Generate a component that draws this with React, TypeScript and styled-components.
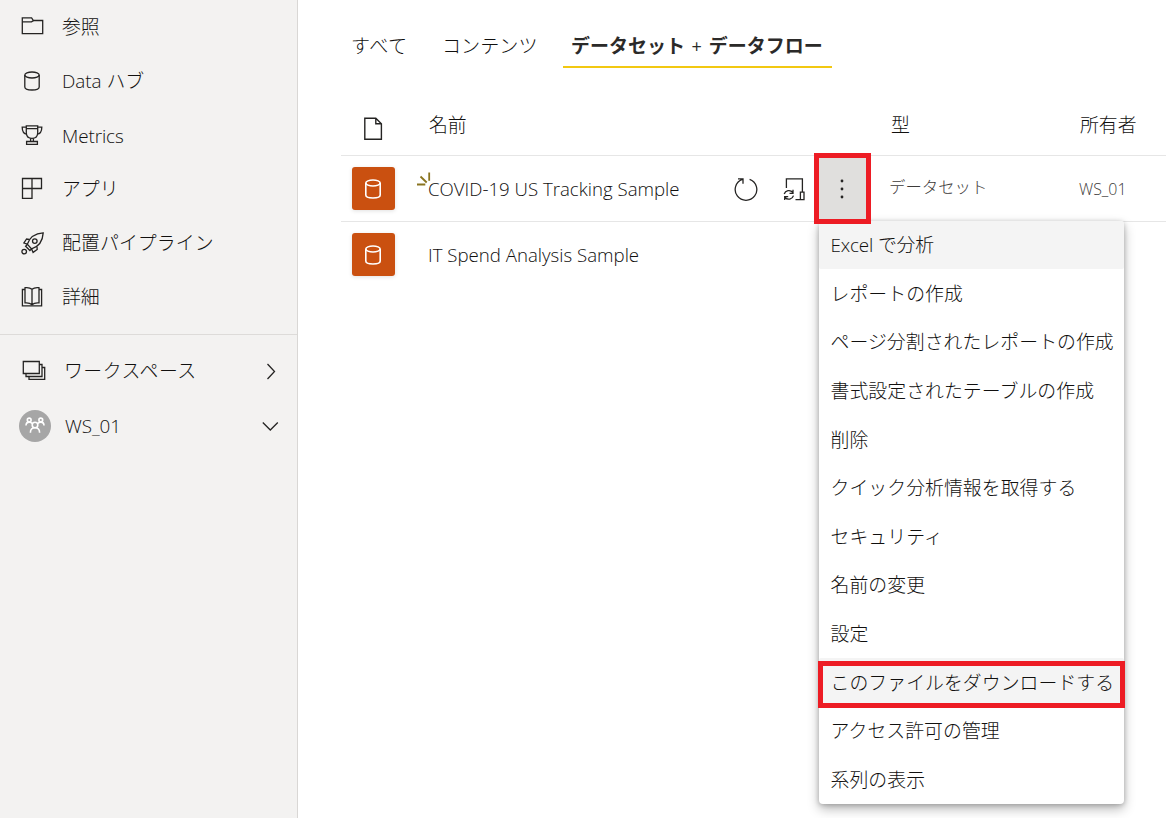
import React from "react";
import styled, { createGlobalStyle } from "styled-components";

const GlobalStyle = createGlobalStyle`
  * { box-sizing: border-box; }
  body {
    margin: 0;
    background: #fff;
    overflow: hidden;
    font-family: "Open Sans", "Noto Sans CJK JP", sans-serif;
    font-size: 18.88px;
    font-weight: 300;
    color: #11100f;
  }
`;

const Page = styled.div`
  display: flex;
  width: 1166px;
  height: 818px;
  overflow: hidden;
`;

const Sidebar = styled.nav`
  flex: 0 0 298px;
  background: #f3f2f1;
  border-right: 1px solid #d9d7d5;
`;

const NavGroup = styled.div<{ $top?: number }>`
  display: flex;
  flex-direction: column;
  padding-top: ${(p) => p.$top ?? 0}px;
`;

const NavItem = styled.a<{ $height?: number }>`
  display: flex;
  align-items: center;
  height: ${(p) => p.$height ?? 54}px;
  padding-right: 17px;
  svg { flex: none; }
`;

const NavIcon = styled.span<{ $width?: number }>`
  display: flex;
  align-items: center;
  width: ${(p) => p.$width ?? 62}px;
  padding-left: 20px;
`;

const Label = styled.span<{ $tracking?: number; $top?: number }>`
  flex: 1;
  padding-top: ${(p) => p.$top ?? 0}px;
  line-height: 26px;
  white-space: nowrap;
  letter-spacing: ${(p) => p.$tracking ?? 0}px;
`;

const Divider = styled.hr`
  height: 1px;
  margin: 10px 0 0;
  border: 0;
  background: #dddbd9;
`;

const Avatar = styled.span`
  display: flex;
  align-items: center;
  justify-content: center;
  width: 32px;
  height: 32px;
  margin-left: -1px;
  border-radius: 50%;
  background: #a6a6a6;
`;

const Main = styled.main`
  flex: 1;
  min-width: 0;
  padding-left: 43px;
`;

const Tabs = styled.div`
  display: flex;
  height: 68px;
  padding: 24px 0 0 10px;
`;

const Tab = styled.button<{ $active?: boolean; $width: number; $tracking?: number }>`
  width: ${(p) => p.$width}px;
  height: 44px;
  margin: 0;
  padding: 0 ${(p) => (p.$active ? 8 : 0)}px;
  border: 0;
  border-bottom: 2px solid ${(p) => (p.$active ? "#f2c811" : "transparent")};
  background: none;
  color: ${(p) => (p.$active ? "#2b2a29" : "inherit")};
  font: inherit;
  font-size: ${(p) => (p.$active ? 19 : 19.1)}px;
  font-weight: ${(p) => (p.$active ? 700 : 300)};
  letter-spacing: ${(p) => p.$tracking ?? 0}px;
  white-space: nowrap;
  text-align: left;
`;

const Plus = styled.span`
  margin: 0 2px 0 1.5px;
  font-size: 18px;
  font-weight: 400;
`;

const Table = styled.div`
  display: flex;
  flex-direction: column;
  padding-top: 27px;
`;

const Row = styled.div<{ $height: number; $last?: boolean }>`
  display: grid;
  grid-template-columns: 87px 306px 48px 32px 57px 18px 190px 1fr;
  align-items: center;
  height: ${(p) => p.$height}px;
  border-bottom: 1px solid ${(p) => (p.$last ? "transparent" : "#e6e6e6")};
`;

const TypeIcon = styled.div`
  display: flex;
  padding-left: 22px;
  padding-top: 8px;
`;

const HeaderCell = styled.div<{ $column?: number; $indent?: number }>`
  grid-column: ${(p) => p.$column ?? "auto"};
  padding-left: ${(p) => p.$indent ?? 1}px;
  line-height: 26px;
`;

const Tile = styled.div`
  display: flex;
  align-items: center;
  justify-content: center;
  width: 43px;
  height: 43px;
  margin-left: 11px;
  padding-right: 1px;
  border-radius: 3px;
  background: #ca5010;
  box-shadow: 0 1px 4px rgba(0, 0, 0, 0.12);
`;

const Name = styled.div`
  position: relative;
  padding-bottom: 1px;
  font-size: 18.65px;
  white-space: nowrap;
`;

const Sparkle = styled.svg`
  position: absolute;
  left: -12px;
  top: -4px;
`;

const Muted = styled.div<{ $size: number; $lift?: number; $drop?: number }>`
  padding-top: ${(p) => p.$drop ?? 0}px;
  padding-bottom: ${(p) => p.$lift ?? 0}px;
  color: #3d3b3a;
  font-size: ${(p) => p.$size}px;
  white-space: nowrap;
`;

const MoreButton = styled.button`
  position: relative;
  z-index: 3;
  display: flex;
  align-items: center;
  justify-content: center;
  width: 57px;
  height: 71px;
  margin: -3px 0;
  padding: 0 1px 0 0;
  border: 5px solid #ed1c24;
  background: #e0dfdd;
`;

const Menu = styled.ul`
  position: absolute;
  z-index: 2;
  left: 819px;
  top: 221px;
  width: 305px;
  height: 583px;
  display: flex;
  flex-direction: column;
  margin: 0;
  padding: 0;
  list-style: none;
  border-radius: 4px;
  background: #fff;
  box-shadow: 0 5px 12px rgba(0, 0, 0, 0.28), 0 1px 5px rgba(0, 0, 0, 0.22);
`;

const MenuItem = styled.li<{ $shaded?: boolean; $tracking?: number }>`
  position: relative;
  display: flex;
  flex: 1;
  align-items: center;
  padding: 0 0 1.4px 11.5px;
  background: ${(p) => (p.$shaded ? "#f4f4f4" : "transparent")};
  border-radius: ${(p) => (p.$shaded ? "2px" : "0")};
  white-space: nowrap;
  letter-spacing: ${(p) => p.$tracking ?? 0.05}px;

  &:first-child {
    flex: 0 0 48px;
    padding-bottom: 2px;
  }
`;

const Highlight = styled.span`
  position: absolute;
  left: -1px;
  right: -1px;
  top: 2.6px;
  height: 47px;
  border: 5px solid #ed1c24;
`;

type IconProps = { size?: number; children: React.ReactNode; color?: string; width?: number };

const Icon = ({ size = 24, children, color = "#252423", width = 1.3 }: IconProps) => (
  <svg width={size} height={size} viewBox={`0 0 ${size} ${size}`} fill="none" stroke={color} strokeWidth={width}>
    {children}
  </svg>
);

const Cylinder = () => (
  <>
    <ellipse cx="12" cy="6" rx="7.2" ry="3" />
    <path d="M4.8 6v12c0 1.7 3.2 3 7.2 3s7.2-1.3 7.2-3V6" />
  </>
);

const FolderIcon = () => (
  <Icon>
    <path d="M2.3 18.6V2.9h9.3l1.8 2.6h9.3v13.1H2.3z" />
    <path d="M2.3 6.9h9.2l2.1-1.4" />
  </Icon>
);

const TrophyIcon = () => (
  <Icon>
    <path d="M6.3 2.9h11.4v6.8c0 3.6-2.4 5.6-5.7 5.6s-5.7-2-5.7-5.6V2.9zM6.3 5.6h11.4" />
    <path d="M6.3 4.2H2.2c0 4 1.5 6.6 4.7 6.9M17.7 4.2h4.1c0 4-1.5 6.6-4.7 6.9M10.6 15.3v2.9M13.4 15.3v2.9M6.6 21.3v-2.8h10.8v2.8z" />
  </Icon>
);

const AppsIcon = () => (
  <Icon>
    <path d="M2.5 1.5h19v10h-19zM12 1.5v19.9H2.5V11.5" />
  </Icon>
);

const RocketIcon = () => (
  <Icon>
    <path d="M7.3 13.2C9.5 6.8 14.4 2.5 23.2 1.9c-.5 8.6-5 13.9-11.6 16z" />
    <path d="M9.2 8.3 6.6 8 3.9 12l3.4 1.2M17 15.8l.2 2.7-4.1 2.9-1.5-3.5M7.6 13.3l-2 1.9 4.3 4.3 1.9-1.9" />
    <circle cx="14.8" cy="10.1" r="2.3" />
    <circle cx="4.2" cy="20.6" r="2.3" />
  </Icon>
);

const BookIcon = () => (
  <Icon>
    <path d="M12 19.8V4.3C10.5 3 8 2.3 5 2.7v15.2c3-.3 5.5.4 7 1.9 1.5-1.5 4-2.2 7-1.9V2.7c-3-.4-5.5.3-7 1.6" />
    <path d="M5 4.5H2.4v16.3h19.2V4.5H19" />
  </Icon>
);

const StackIcon = () => (
  <Icon size={26}>
    <path d="M3.3 3.5h16v12h-16zM6 15.5v3h16v-12h-2.7M9 18.5v2.8h15.7V9.5H22" />
  </Icon>
);

const PeopleIcon = () => (
  <Icon size={22} color="#fff" width={1.6}>
    <circle cx="5.2" cy="5" r="1.9" />
    <circle cx="16.8" cy="5" r="1.9" />
    <circle cx="11" cy="10" r="2.8" />
    <path d="M2 10.6c0-2.1 1.3-3.5 3.2-3.5 1.3 0 2.2.6 3.4 1.6M20 10.6c0-2.1-1.3-3.5-3.2-3.5-1.3 0-2.2.6-3.4 1.6M6.4 17.8c0-3 1.8-5 4.6-5s4.6 2 4.6 5" />
  </Icon>
);

const DatasetTile = () => (
  <Tile>
    <Icon color="#fff" width={1.6}>
      <Cylinder />
    </Icon>
  </Tile>
);

const menuItems = [
  "Excel で分析",
  "レポートの作成",
  "ページ分割されたレポートの作成",
  "書式設定されたテーブルの作成",
  "削除",
  "クイック分析情報を取得する",
  "セキュリティ",
  "名前の変更",
  "設定",
  "このファイルをダウンロードする",
  "アクセス許可の管理",
  "系列の表示",
];

export default function App() {
  return (
    <>
      <GlobalStyle />
      <Page lang="ja">
        <Sidebar>
          <NavGroup>
            <NavItem><NavIcon><FolderIcon /></NavIcon><Label>参照</Label></NavItem>
            <NavItem><NavIcon><Icon><Cylinder /></Icon></NavIcon><Label>Data ハブ</Label></NavItem>
            <NavItem><NavIcon><TrophyIcon /></NavIcon><Label $top={2} $tracking={-0.1}>Metrics</Label></NavItem>
            <NavItem><NavIcon><AppsIcon /></NavIcon><Label>アプリ</Label></NavItem>
            <NavItem><NavIcon><RocketIcon /></NavIcon><Label $tracking={0.1}>配置パイプライン</Label></NavItem>
            <NavItem><NavIcon><BookIcon /></NavIcon><Label>詳細</Label></NavItem>
          </NavGroup>
          <Divider />
          <NavGroup $top={8}>
            <NavItem $height={55}>
              <NavIcon $width={64}><StackIcon /></NavIcon>
              <Label $tracking={0.5} $top={1}>ワークスペース</Label>
              <Icon size={18}><path d="M5.5 2l7 7.5-7 7.5" /></Icon>
            </NavItem>
            <NavItem $height={55}>
              <NavIcon $width={65}><Avatar><PeopleIcon /></Avatar></NavIcon>
              <Label $tracking={-0.1}>WS_01</Label>
              <Icon size={18}><path d="M.8 5.5l7.5 7.5 7.5-7.5" /></Icon>
            </NavItem>
          </NavGroup>
        </Sidebar>
        <Main>
          <Tabs>
            <Tab $width={91} $tracking={0.4}>すべて</Tab>
            <Tab $width={121}>コンテンツ</Tab>
            <Tab $width={269} $active>データセット <Plus>+</Plus> データフロー</Tab>
          </Tabs>
          <Table>
            <Row $height={61}>
              <TypeIcon>
                <Icon width={1.4}><path d="M1.8 1.2h11l5.6 5.6v15.5H1.8zM12.8 1.2v5.6h5.6" /></Icon>
              </TypeIcon>
              <HeaderCell>名前</HeaderCell>
              <HeaderCell $column={7} $indent={2}>型</HeaderCell>
              <HeaderCell>所有者</HeaderCell>
            </Row>
            <Row $height={66}>
              <DatasetTile />
              <Name>
                <Sparkle width="15" height="16" viewBox="0 0 15 16" stroke="#8a7420" strokeWidth="1.8">
                  <path d="M1 12.5h8.3M4.5 4.5l6.2 6M13.2 .5v8.3" />
                </Sparkle>
                COVID-19 US Tracking Sample
              </Name>
              <Icon><path d="M15.6 2.3A10.8 10.8 0 1 1 8.4 2.3M4 1.8h5v5" /></Icon>
              <Icon>
                <path d="M4.4 11V1.8h16V15.2M13.5 22.7h5M18.4 15.2h3.6v7.5h-3.6z" />
                <path d="M2.2 17a5 5 0 0 1 8.5-1.7M11 12.8v3.5H7.5M11.5 18.6A5 5 0 0 1 3 20.5M2.7 23v-3.4h3.5" />
              </Icon>
              <MoreButton aria-label="その他">
                <svg width="6" height="22" fill="#252423">
                  <circle cx="3" cy="3" r="1.4" /><circle cx="3" cy="11" r="1.4" /><circle cx="3" cy="19" r="1.4" />
                </svg>
              </MoreButton>
              <span />
              <Muted $size={16.4} $lift={5}>データセット</Muted>
              <Muted $size={15.9} $drop={1}>WS_01</Muted>
            </Row>
            <Row $height={66} $last>
              <DatasetTile />
              <Name>IT Spend Analysis Sample</Name>
            </Row>
          </Table>
        </Main>
        <Menu>
          {menuItems.map((item, i) => (
            <MenuItem key={item} $shaded={i === 0 || i === 9} $tracking={i === 0 ? -0.15 : 0.05}>
              {item}
              {i === 9 && <Highlight />}
            </MenuItem>
          ))}
        </Menu>
      </Page>
    </>
  );
}
